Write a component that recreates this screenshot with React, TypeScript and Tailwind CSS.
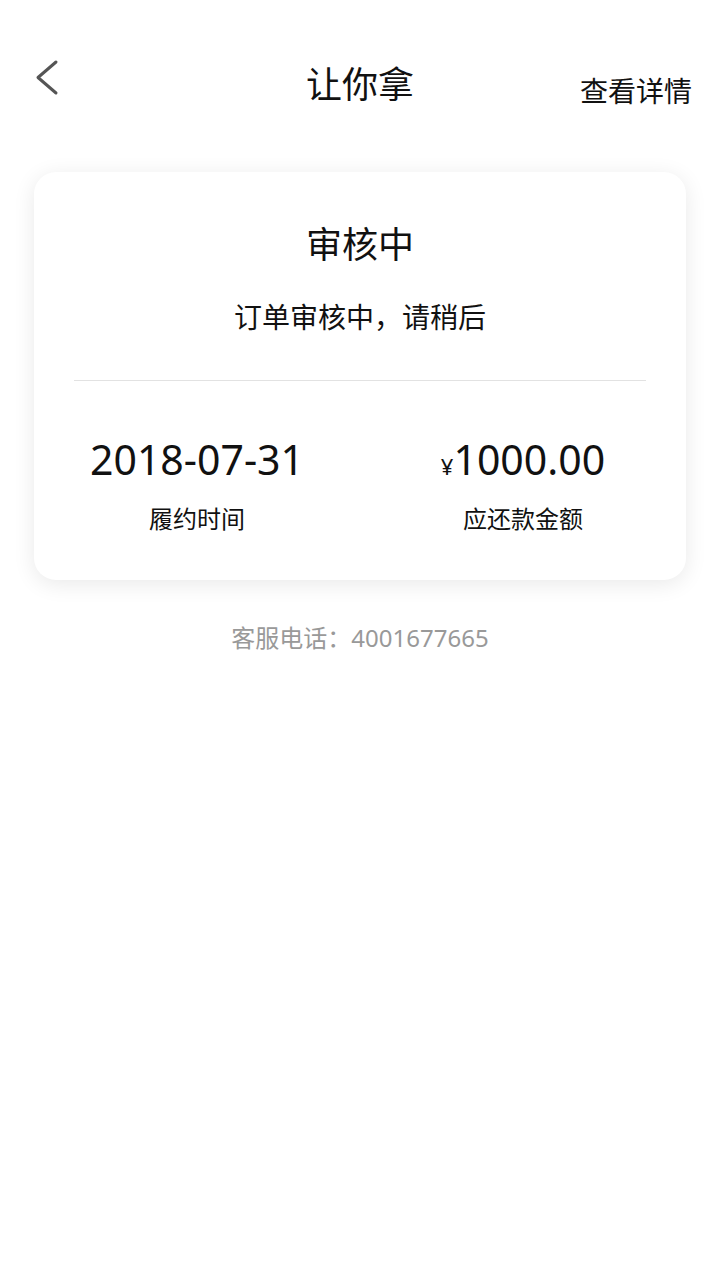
export default function App() {
  return (
    <div
      className="bg-white min-h-screen w-full text-[#111]"
      style={{ fontFamily: '"Noto Sans", "Noto Sans CJK SC", sans-serif' }}
    >
      {/* header */}
      <div className="grid grid-cols-[1fr_auto_1fr] h-[105px] items-start">
        <div className="pl-[32px] pt-[58px]">
          <svg width="30" height="40" viewBox="0 0 30 40" fill="none">
            <path d="M24 4L6 19.5L24 35" stroke="#555" strokeWidth="3" strokeLinecap="round" strokeLinejoin="round" />
          </svg>
        </div>
        <h1 className="pt-[67px] text-[36px] leading-none font-normal">让你拿</h1>
        <div className="flex justify-end pr-[28px] pt-[77px]">
          <span className="text-[28px] leading-none">查看详情</span>
        </div>
      </div>

      {/* status card */}
      <div className="mx-[34px] mt-[67px] rounded-[22px] bg-white shadow-[0_4px_22px_rgba(0,0,0,0.09)] pt-[55px] pb-[49px]">
        <div className="text-center text-[36px] leading-none">审核中</div>
        <div className="text-center text-[28px] leading-none mt-[40px]">订单审核中，请稍后</div>
        <div className="mx-[40px] mt-[49px] h-px bg-[#e2e2e2]"></div>
        <div className="grid grid-cols-2 mt-[58px]">
          <div className="flex flex-col items-center">
            <div className="text-[41px] leading-none">2018-07-31</div>
            <div className="text-[24px] leading-none mt-[27px]">履约时间</div>
          </div>
          <div className="flex flex-col items-center">
            <div className="text-[41px] leading-none flex items-baseline">
              <span className="text-[22px]">¥</span>
              <span>1000.00</span>
            </div>
            <div className="text-[24px] leading-none mt-[27px]">应还款金额</div>
          </div>
        </div>
      </div>

      <p className="text-center text-[24px] leading-none text-[#999] mt-[46px]">客服电话：4001677665</p>
    </div>
  )
}
